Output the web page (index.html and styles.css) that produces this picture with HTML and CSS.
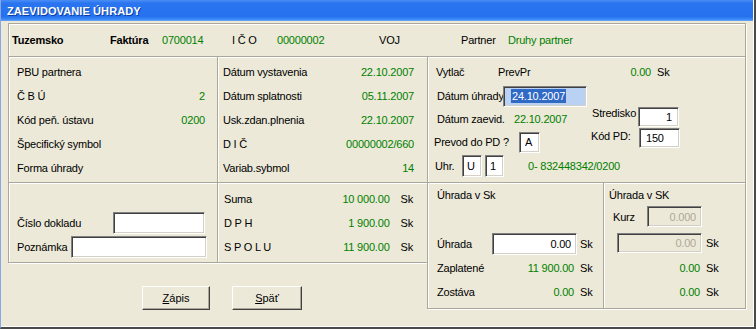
FILE: index.html
```html
<!DOCTYPE html>
<html>
<head lang="sk">
    <meta charset="UTF-8">
    <title>Zaevidovanie úhrady</title>
    <link rel="stylesheet" href="styles.css">
</head>
<body>
<div class="window">
    <div class="title">ZAEVIDOVANIE ÚHRADY</div>
    <div class="content">
        <!--hlavicka-->
        <div class="panel header">
            <b>Tuzemsko</b>
            <b>Faktúra</b>
            <span class="val">0700014</span>
            <span>I Č O</span>
            <span class="val">00000002</span>
            <span>VOJ</span>
            <span>Partner</span>
            <span class="val">Druhy partner</span>
        </div>

        <div class="grid">
            <!--partner-->
            <div class="panel list pbu">
                <div class="row"><span>PBU partnera</span></div>
                <div class="row"><span>Č B Ú</span><span class="val">2</span></div>
                <div class="row"><span>Kód peň. ústavu</span><span class="val">0200</span></div>
                <div class="row"><span>Špecifický symbol</span></div>
                <div class="row"><span>Forma úhrady</span></div>
            </div>

            <!--datumy-->
            <div class="panel list dates">
                <div class="row"><span>Dátum vystavenia</span><span class="val">22.10.2007</span></div>
                <div class="row"><span>Dátum splatnosti</span><span class="val">05.11.2007</span></div>
                <div class="row"><span>Usk.zdan.plnenia</span><span class="val">22.10.2007</span></div>
                <div class="row"><span>D I Č</span><span class="val">00000002/660</span></div>
                <div class="row"><span>Variab.sybmol</span><span class="val">14</span></div>
            </div>

            <!--uhrada-->
            <div class="panel pay-info">
                <div class="line">
                    <span class="lbl-vytlac">Vytlač</span>
                    <span class="prevpr">PrevPr</span>
                    <span class="val amount">0.00</span>
                    <span class="sk">Sk</span>
                </div>
                <div class="line">
                    <span class="lbl-datum">Dátum úhrady</span>
                    <div class="field date-field"><span class="sel">24.10.2007</span></div>
                </div>
                <div class="split">
                    <div class="split-left">
                        <div class="line short">
                            <span class="lbl-zaevid">Dátum zaevid.</span>
                            <span class="val">22.10.2007</span>
                        </div>
                        <div class="line">
                            <span class="lbl-prevod">Prevod do PD ?</span>
                            <input class="field small" value="A" readonly>
                        </div>
                    </div>
                    <div class="split-right">
                        <div class="line pair">
                            <span class="lbl-stred">Stredisko</span>
                            <input class="field code right" value="1" readonly>
                        </div>
                        <div class="line pair">
                            <span class="lbl-kod">Kód PD:</span>
                            <input class="field code" value="150" readonly>
                        </div>
                    </div>
                </div>
                <div class="line">
                    <span class="lbl-uhr">Uhr.</span>
                    <input class="field tiny" value="U" readonly>
                    <input class="field tiny" value="1" readonly>
                    <span class="val account">0- 832448342/0200</span>
                </div>
            </div>

            <!--doklad-->
            <div class="panel doc">
                <div class="line">
                    <span class="lbl-cislo">Číslo dokladu</span>
                    <input class="field doc-no" readonly>
                </div>
                <div class="line">
                    <span class="lbl-pozn">Poznámka</span>
                    <input class="field note" readonly>
                </div>
            </div>

            <!--sumy-->
            <div class="panel list sum">
                <div class="row"><span class="grow">Suma</span><span class="val">10 000.00</span><span class="sk">Sk</span></div>
                <div class="row"><span class="grow">D P H</span><span class="val">1 900.00</span><span class="sk">Sk</span></div>
                <div class="row"><span class="grow">S P O L U</span><span class="val">11 900.00</span><span class="sk">Sk</span></div>
            </div>

            <!--uhrada v Sk-->
            <div class="panel pay">
                <div class="line">Úhrada v Sk</div>
                <div class="line pay-input">
                    <span class="lbl-pay">Úhrada</span>
                    <input class="field pay-field right" value="0.00" readonly>
                    <span class="sk-near">Sk</span>
                </div>
                <div class="line">
                    <span class="lbl-pay">Zaplatené</span>
                    <span class="val pay-val">11 900.00</span>
                    <span class="sk">Sk</span>
                </div>
                <div class="line">
                    <span class="lbl-pay">Zostáva</span>
                    <span class="val pay-val">0.00</span>
                    <span class="sk">Sk</span>
                </div>
            </div>

            <!--uhrada v SK (mena)-->
            <div class="panel pay-sk">
                <div class="line">Úhrada v SK</div>
                <div class="line kurz">
                    <span class="lbl-kurz">Kurz</span>
                    <input class="field kurz-field right" value="0.000" disabled>
                </div>
                <div class="line sk-input">
                    <input class="field cur-field right" value="0.00" disabled>
                    <span class="sk-near">Sk</span>
                </div>
                <div class="line">
                    <span class="val cur-val">0.00</span>
                    <span class="sk">Sk</span>
                </div>
                <div class="line">
                    <span class="val cur-val">0.00</span>
                    <span class="sk">Sk</span>
                </div>
            </div>

            <!--tlacidla-->
            <div class="buttons">
                <button class="btn zapis"><u>Z</u>ápis</button>
                <button class="btn spat"><u>S</u>päť</button>
            </div>
        </div>
    </div>
</div>
</body>
</html>
```

FILE: styles.css
```css
*{
    margin:0;
    padding:0;
}
body{
    font:11px "Liberation Sans", Arial, sans-serif;
    letter-spacing:-0.2px;
    white-space:nowrap;
    color:#000;
    background:#ece9d8;
}
.window{
    width:756px;
    height:329px;
    box-sizing:border-box;
    background:#ece9d8;
    border-left:1px solid #8aa8e8;
    border-right:2px solid #4a4a4a;
    border-bottom:2px solid #4a4a4a;
    box-shadow:inset -1px -1px 0 #fff;
    overflow:hidden;
}
.title{
    height:19px;
    padding:2px 0 0 6px;
    line-height:19px;
    font-weight:bold;
    color:#fff;
    letter-spacing:0.1px;
    text-shadow:1px 1px 0 #0a3fa8;
    background:linear-gradient(#4b8ef5, #2a74ef 15%, #2672ee 80%, #3d8af5 92%, #6aa6f7 100%);
    margin-right:1px;
}
.content{
    padding:2px 0 0 7px;
}
.val{
    color:#008000;
}
/*etched ramik*/
.panel{
    box-sizing:border-box;
    border:1px solid #aca899;
    box-shadow:inset 1px 1px 0 #fff, 1px 1px 0 #fff;
}
.header{
    width:738px;
    height:34px;
    padding-left:3px;
    display:grid;
    grid-template-columns:98px 52px 70px 45px 102px 82px 47px auto;
    align-items:center;
}
.grid{
    margin-top:-1px;
    display:grid;
    grid-template-columns:209px 210px 176px 142px;
    grid-template-rows:126px 80px 46px;
}
.grid > .panel{
    margin:0 -1px -1px 0;
}
.pbu{ grid-column:1; grid-row:1; }
.dates{ grid-column:2; grid-row:1; }
.pay-info{ grid-column:3 / 5; grid-row:1; }
.doc{ grid-column:1; grid-row:2; }
.sum{ grid-column:2; grid-row:2; }
.pay{ grid-column:3; grid-row:2 / 4; }
.pay-sk{ grid-column:4; grid-row:2 / 4; }
.buttons{ grid-column:1 / 3; grid-row:3; }

.list .row{
    height:24px;
    display:flex;
    align-items:center;
    justify-content:space-between;
}
.pbu{
    padding:3px 12px 0 8px;
}
.dates{
    padding:3px 13px 0 5px;
}
.sum{
    padding:4px 14px 0 6px;
}
.grow{
    flex:1;
}
.sk{
    margin-left:11px;
}

.line{
    height:24px;
    display:flex;
    align-items:center;
}
.line > *{
    flex-shrink:0;
}

/*pravy horny panel*/
.pay-info{
    padding:3px 0 0 8px;
}
.lbl-vytlac{ width:62px; }
.prevpr{ width:120px; }
.amount{ width:33px; text-align:right; }
.pay-info .sk{ margin-left:6px; }
.lbl-datum{ width:67px; padding-left:1px; box-sizing:border-box; }
.field.date-field{
    width:84px;
    height:21px;
    padding:0 0 0 7px;
    display:flex;
    align-items:center;
    background:#b9d1f3;
}
.sel{
    background:#316ac5;
    color:#fff;
    line-height:14px;
    padding:0 1px;
}
.split{
    display:flex;
}
.split-left{
    width:155px;
}
.line.short{
    height:22px;
}
.lbl-zaevid{ width:78px; padding-left:1px; box-sizing:border-box; }
.lbl-prevod{ width:85px; margin-left:-2px; }
.split-right{
    display:flex;
    flex-direction:column;
    gap:1px;
    margin-top:-1px;
}
.line.pair{
    height:20px;
    align-items:flex-start;
}
.lbl-stred{ width:47px; padding-left:1px; box-sizing:border-box; line-height:12px; }
.lbl-kod{ width:48px; line-height:16px; }
.lbl-uhr{ width:27px; margin-left:-1px; }
.account{ margin-left:24px; }

/*polia*/
.field{
    box-sizing:border-box;
    font:11px "Liberation Sans", Arial, sans-serif;
    letter-spacing:-0.2px;
    color:#000;
    background:#fff;
    border:1px solid;
    border-color:#808080 #fff #fff #808080;
    box-shadow:inset 1px 1px 0 #404040, inset -1px -1px 0 #d4d0c8;
    padding:0 5px;
    outline:none;
}
.field.right{
    text-align:right;
}
.field:disabled{
    background:#ece9d8;
    color:#aca899;
}
.small{ width:21px; height:21px; }
.code{ width:41px; height:20px; padding:0 6px; }
.tiny{ width:20px; height:22px; padding:0 4px; }
.tiny + .tiny{ margin-left:3px; width:19px; }

/*doklad*/
.doc{
    padding:29px 0 0 8px;
}
.doc .line{
    height:22px;
}
.doc .line + .line{
    margin-top:2px;
}
.lbl-cislo{ width:96px; }
.lbl-pozn{ width:54px; }
.doc-no{ width:92px; height:22px; }
.note{ width:136px; height:22px; }

/*uhrada v Sk*/
.pay{
    padding:0 0 0 9px;
}
.pay-input{
    height:23px;
    margin-top:25px;
    margin-bottom:1px;
}
.lbl-pay{ width:55px; }
.pay-field{ width:85px; height:22px; }
.sk-near{ margin-left:3px; }
.pay-val{ width:82px; text-align:right; }
.pay .sk, .pay-sk .sk{ margin-left:6px; }

.pay-sk{
    padding:0 0 0 5px;
}
.kurz{
    height:21px;
    margin-top:-1px;
}
.lbl-kurz{ width:34px; margin-left:4px; }
.kurz-field{ width:55px; height:21px; }
.sk-input{
    height:20px;
    margin-top:6px;
    margin-bottom:3px;
}
.cur-field{ width:85px; height:20px; margin-left:8px; }
.sk-input .sk-near{ margin-left:4px; }
.cur-val{ width:91px; text-align:right; }

/*tlacidla*/
.buttons{
    padding:24px 0 0 134px;
    display:flex;
    align-items:flex-start;
    gap:22px;
}
.btn{
    height:24px;
    font:11px "Liberation Sans", Arial, sans-serif;
    color:#000;
    background:#ece9d8;
    border:1px solid;
    border-color:#fff #404040 #404040 #fff;
    box-shadow:inset -1px -1px 0 #aca899;
}
.zapis{ width:68px; }
.spat{ width:70px; }
```
